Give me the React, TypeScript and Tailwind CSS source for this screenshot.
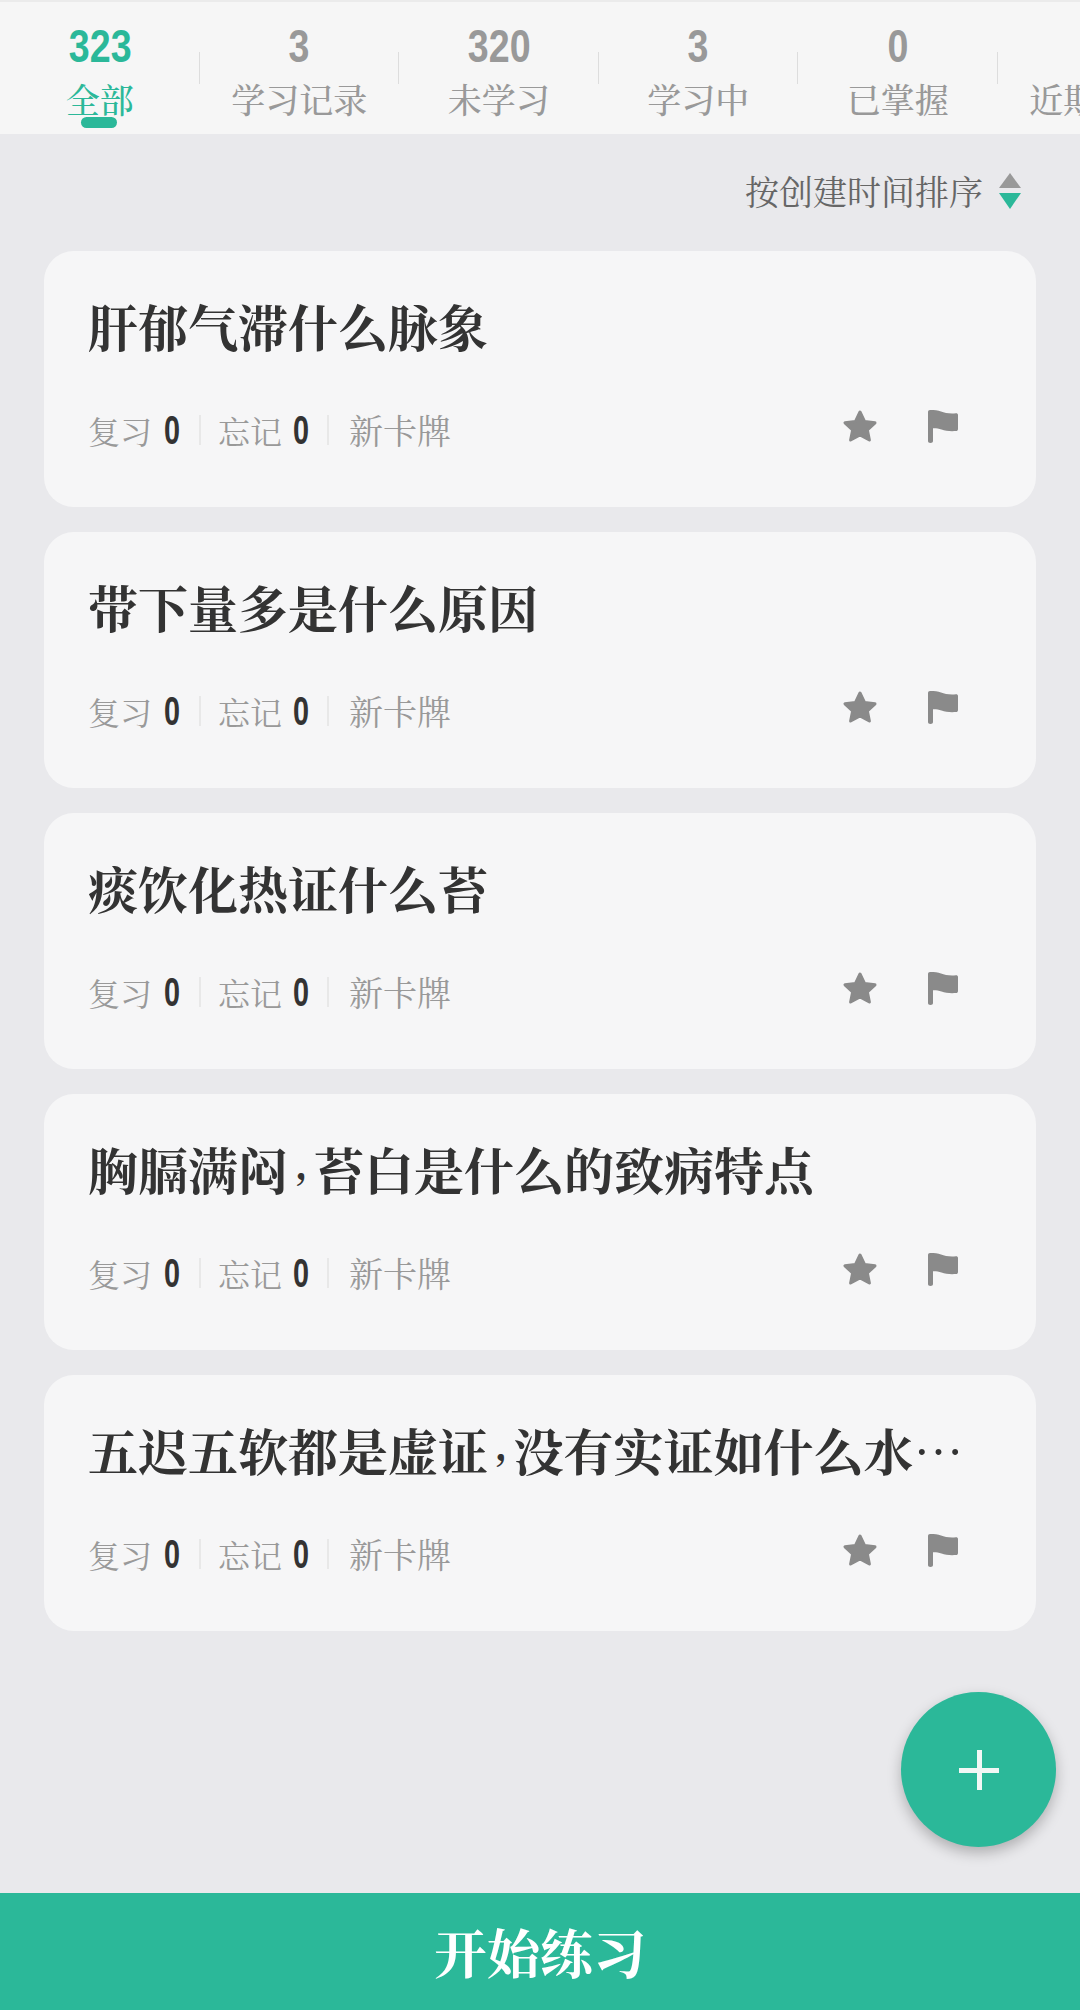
const cjk = "font-['Noto_Serif_CJK_SC','Noto_Sans_CJK_SC',serif]";
const num = "font-['Liberation_Sans','Arial',sans-serif]";

const tabs = [
  { n: "323", l: "全部", active: true },
  { n: "3", l: "学习记录" },
  { n: "320", l: "未学习" },
  { n: "3", l: "学习中" },
  { n: "0", l: "已掌握" },
  { n: "0", l: "近期学习" },
];

const titles: [string, string?][] = [
  ["肝郁气滞什么脉象"],
  ["带下量多是什么原因"],
  ["痰饮化热证什么苔"],
  ["胸膈满闷", "苔白是什么的致病特点"],
  ["五迟五软都是虚证", "没有实证如什么水…"],
];

function Star() {
  return (
    <svg width="36" height="34" viewBox="0 0 36 34" className="text-[#8a8a8a]">
      <polygon
        points="18,3 22.5,12.5 33,13.8 25.4,21 27.4,31 18,26 8.6,31 10.6,21 3,13.8 13.5,12.5"
        fill="currentColor"
        stroke="currentColor"
        strokeWidth="3"
        strokeLinejoin="round"
      />
    </svg>
  );
}

function Flag() {
  return (
    <svg width="30" height="33" viewBox="0 0 30 33" className="text-[#8a8a8a]">
      <path
        d="M0 2C0 .8.8 0 2 0c4.500 0 8 .4 11 1.600 4 1.600 9 2.200 15 1.700 1.200 0 2 .6 2 1.700v14c0 1.200-.7 2-2 2.100-6 .4-10.500-.1-14.500-1.600-3-1.100-5.500-1.400-8.500-1.300V31c0 1.200-.9 2-2.500 2S0 32.200 0 31z"
        fill="currentColor"
      />
    </svg>
  );
}

function Zero() {
  return (
    <span className={`${num} flex w-[16px] justify-center text-[40px] font-bold leading-[44px] text-[#333333]`}>
      <span className="scale-x-[0.72]">0</span>
    </span>
  );
}

function Card({ title }: { title: [string, string?] }) {
  return (
    <div className="flex h-[256px] flex-col rounded-[30px] bg-[#f6f6f7] pl-[44px] pr-[78px]">
      <div className={`${cjk} mt-[41px] flex h-[66px] items-center whitespace-nowrap text-[50px] font-bold leading-[66px] text-[#333333]`}>
        <span>{title[0]}</span>
        {title[1] && (
          <>
            <span className="mx-[6px] w-[14px] -translate-y-[6px] text-center text-[40px]">,</span>
            <span>{title[1]}</span>
          </>
        )}
      </div>
      <div className="mt-[50px] flex h-[44px] items-center">
        <span className={`${cjk} text-[32px] leading-[44px] text-[#999999]`}>复习</span>
        <span className="ml-[12px]">
          <Zero />
        </span>
        <span className="ml-[19px] h-[30px] w-[2px] bg-[#e8e8e8]" />
        <span className={`${cjk} ml-[17px] text-[32px] leading-[44px] text-[#999999]`}>忘记</span>
        <span className="ml-[11px]">
          <Zero />
        </span>
        <span className="ml-[18px] h-[30px] w-[2px] bg-[#e8e8e8]" />
        <span className={`${cjk} ml-[20px] text-[34px] leading-[44px] text-[#999999]`}>新卡牌</span>
        <div className="ml-auto flex items-center gap-[50px] pb-[8px]">
          <Star />
          <Flag />
        </div>
      </div>
    </div>
  );
}

export default function App() {
  return (
    <div lang="zh-CN" className="relative flex h-[2010px] w-[1080px] flex-col overflow-hidden bg-[#e9e9ec]">
      <div className="flex h-[134px] shrink-0 overflow-hidden border-t-[2px] border-[#ebebeb] bg-[#f6f6f6]">
        {tabs.map((t, i) => (
          <div key={i} className="relative flex w-[199.5px] shrink-0 flex-col items-center">
            <div
              className={`${num} mt-[19px] h-[50px] scale-x-[0.8] text-[47px] font-bold leading-[50px] ${
                t.active ? "text-[#2bb899]" : "text-[#999999]"
              }`}
            >
              {t.n}
            </div>
            <div
              className={`${cjk} mt-[6px] whitespace-nowrap text-[34px] font-medium leading-[44px] ${
                t.active ? "text-[#2bb899]" : "text-[#999999]"
              }`}
            >
              {t.l}
            </div>
            {t.active && (
              <div className="absolute left-[81px] top-[115px] h-[11px] w-[36px] rounded-full bg-[#2bb899]" />
            )}
            <div className="absolute right-0 top-[50px] h-[32px] w-px bg-[#dddddd]" />
          </div>
        ))}
      </div>

      <div className="flex flex-1 flex-col px-[44px]">
        <div className="flex h-[117px] shrink-0 items-center justify-end pr-[14px]">
          <span className={`${cjk} -translate-y-[2px] text-[34px] leading-[44px] text-[#666666]`}>按创建时间排序</span>
          <svg width="22" height="36" viewBox="0 0 22 36" className="ml-[16px] mr-[1px] -translate-y-[2px]">
            <polygon points="11,0 22,15 0,15" fill="#999999" />
            <polygon points="0,20 22,20 11,36" fill="#2bb899" />
          </svg>
        </div>
        <div className="flex flex-col gap-[25px]">
          {titles.map((t, i) => (
            <Card key={i} title={t} />
          ))}
        </div>
      </div>

      <div className="absolute left-[901px] top-[1692px] flex h-[155px] w-[155px] items-center justify-center rounded-full bg-[#2bb899] shadow-[0_6px_14px_rgba(0,0,0,0.25)]">
        <svg width="40" height="40" viewBox="0 0 40 40">
          <rect x="18" y="0" width="5" height="40" fill="#f2f7f5" />
          <rect x="0" y="18" width="40" height="5" fill="#f2f7f5" />
        </svg>
      </div>

      <div className={`${cjk} flex h-[117px] shrink-0 items-center justify-center bg-[#2bb899] text-[53px] font-bold text-white`}>
        开始练习
      </div>
    </div>
  );
}
